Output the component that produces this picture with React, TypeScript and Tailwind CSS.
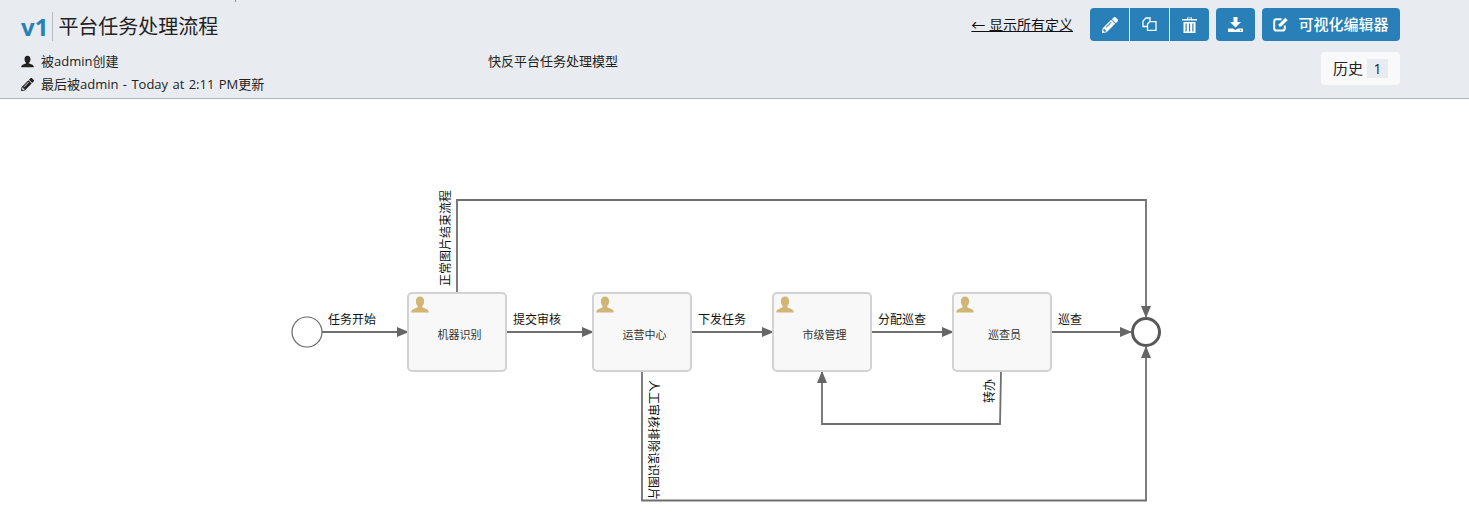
import { FaPencilAlt } from 'react-icons/fa';

const font = '[font-family:"Open_Sans","Noto_Sans_CJK_SC",sans-serif]';

const tasks = [
    { name: '机器识别', left: 'left-[407px]' },
    { name: '运营中心', left: 'left-[592px]' },
    { name: '市级管理', left: 'left-[772px]' },
    { name: '巡查员', left: 'left-[952px]' },
];

const userPath = 'M9 1c2.6 0 3.9 2 3.9 4.4 0 1.8-.7 3.4-1.7 4.3-.3.8 0 1.500.9 1.900 2.200.9 4.700 1.600 5.100 3.400v1H.8v-1c.4-1.800 2.900-2.500 5.100-3.400.9-.4 1.200-1.100.9-1.900-1-.9-1.700-2.500-1.700-4.300C5.100 3 6.400 1 9 1z';

function CopyIcon() {
    return (
        <svg width="15" height="14" viewBox="0 0 15 14" fill="none" stroke="white" strokeWidth="1.300">
            <path d="M5 9.500H1V4L4 1H8V4.500" />
            <path d="M7.500 4.700H14V13.300H5.500V7z" />
        </svg>
    );
}

function TrashIcon() {
    return (
        <svg width="15" height="16" viewBox="0 0 15 16" fill="white">
            <path d="M5 2V.6h5V2h5v1.500H0V2zM6 2h3V1.300H6z" />
            <path d="M1.500 5h12v11h-12zM3.500 6.500v8h1.200v-8zM6.900 6.500v8h1.200v-8zM10.300 6.500v8h1.200v-8z" fillRule="evenodd" />
        </svg>
    );
}

function DownloadIcon() {
    return (
        <svg width="15" height="15" viewBox="0 0 15 15" fill="white">
            <path d="M5.500 0h4v5h3.500l-5.500 5.500L2 5h3.500z" />
            <path d="M0 11.500h5l2.500 1.500 2.500-1.500h5V15H0zM12 12.800v1h1.300v-1z" fillRule="evenodd" />
        </svg>
    );
}

function EditIcon() {
    return (
        <svg width="16" height="15" viewBox="0 0 16 15" fill="none" stroke="white">
            <path d="M8.500 2.200H3.500Q1.200 2.200 1.200 4.500V11.200Q1.200 13.600 3.500 13.600H9.500Q11.800 13.600 11.800 11.200V8.500" strokeWidth="2" />
            <path d="M5.800 9.500V7.300L12.300 .8L14.700 3.200L8.200 9.500z" fill="white" stroke="none" />
        </svg>
    );
}

function Arrow({ d }: { d: string }) {
    return <path d={d} fill="none" stroke="#6f6f6f" strokeWidth="1.800" markerEnd="url(#arrow)" />;
}

function UserGlyph({ className, fill }: { className: string; fill: string }) {
    return (
        <svg className={className} width="18" height="17" viewBox="0.500 0.500 17 16" fill={fill}>
            <path d={userPath} />
        </svg>
    );
}

export default function App() {
    return (
        <div className={`w-[1469px] h-[524px] overflow-hidden bg-white text-[#222] ${font}`}>
            {/* HEADER */}
            <header className="relative h-[99px] bg-[#e8ecf1] border-b border-[#a9b2bf] flex justify-between pl-[21px] pr-[69px]">
                <span className="absolute left-[235px] top-0 w-[1px] h-[2px] bg-[#8a8f96]" />
                <div className="flex flex-col">
                    <div className="flex items-center h-[40px] mt-[6px]">
                        <span className="text-[#2980b9] text-[24px] font-bold pr-[4px] h-[29px] leading-[29px] border-r border-[#b4bcc7]">v1</span>
                        <h1 className="text-[20px] leading-[29px] pl-[5px] text-[#222]">平台任务处理流程</h1>
                    </div>
                    <div className="flex mt-[4px] text-[13px] leading-[23px]">
                        <div className="w-[467px] flex flex-col">
                            <div className="flex items-center gap-[7px]">
                                <UserGlyph className="w-[13px] h-[13px]" fill="#222" />
                                <span>被admin创建</span>
                            </div>
                            <div className="flex items-center gap-[7px]">
                                <FaPencilAlt size={13} className="text-[#222]" />
                                <span className="[word-spacing:1px]">最后被admin - Today at 2:11 PM更新</span>
                            </div>
                        </div>
                        <div>快反平台任务处理模型</div>
                    </div>
                </div>

                <div className="flex flex-col items-end pt-[8px]">
                    <div className="flex items-center h-[33px]">
                        <a className="text-[14px] text-[#111] underline mr-[17px]">← 显示所有定义</a>
                        <div className="flex h-[33px] rounded-[4px] bg-[#2980b9] text-white divide-x divide-[#e8ecf1] mr-[7px]">
                            <button className="w-[40px] flex items-center justify-center"><FaPencilAlt size={16} /></button>
                            <button className="w-[40px] flex items-center justify-center pb-[2px]"><CopyIcon /></button>
                            <button className="w-[39px] flex items-center justify-center"><TrashIcon /></button>
                        </div>
                        <button className="w-[39px] h-[33px] rounded-[4px] bg-[#2980b9] text-white flex items-center justify-center mr-[7px]"><DownloadIcon /></button>
                        <button className="w-[138px] h-[33px] rounded-[4px] bg-[#2980b9] text-white flex items-center justify-center gap-[9px] text-[15px] font-medium">
                            <EditIcon />
                            可视化编辑器
                        </button>
                    </div>
                    <div className="mt-[11px] w-[79px] h-[33px] rounded-[4px] bg-[#f8f9fb] flex items-center pl-[12px] text-[15px]">
                        历史
                        <span className="ml-[4px] w-[21px] h-[19px] bg-[#e8ecf1] flex items-center justify-center text-[14px]">1</span>
                    </div>
                </div>
            </header>

            {/* DIAGRAM */}
            <main className="relative h-[425px]">
                <svg className="absolute left-0 top-0" width="1469" height="425" viewBox="0 99 1469 425">
                    <defs>
                        <marker id="arrow" viewBox="0 0 12 10" refX="12" refY="5" markerWidth="12" markerHeight="10" markerUnits="userSpaceOnUse" orient="auto">
                            <path d="M0 0L12 5L0 10z" fill="#666" />
                        </marker>
                    </defs>
                    <circle cx="307" cy="332" r="15" fill="white" stroke="#666" strokeWidth="1.200" />
                    <circle cx="1146" cy="332" r="13.500" fill="white" stroke="#585858" strokeWidth="3" />
                    <Arrow d="M322 332H409" />
                    <Arrow d="M507 332H594" />
                    <Arrow d="M692 332H774" />
                    <Arrow d="M872 332H954" />
                    <Arrow d="M1052 332H1132" />
                    <Arrow d="M457 292V200H1146V318" />
                    <Arrow d="M642 372V500.500H1146V346" />
                    <Arrow d="M1001 372L1000 424H822V371" />
                    <g fontSize="12" fill="#111">
                        <text x="328" y="324">任务开始</text>
                        <text x="513" y="324">提交审核</text>
                        <text x="698" y="324">下发任务</text>
                        <text x="878" y="324">分配巡查</text>
                        <text x="1058" y="324">巡查</text>
                        <text transform="translate(450 286) rotate(-90)">正常图片结束流程</text>
                        <text transform="translate(649 380) rotate(90)">人工审核排除误识图片</text>
                        <text transform="translate(994 403) rotate(-90)">转办</text>
                    </g>
                </svg>
                {tasks.map((task) => (
                    <div
                        key={task.name}
                        className={`absolute top-[193px] ${task.left} w-[100px] h-[80px] rounded-[5px] border-2 border-[#d2d2d2] bg-[#f8f8f8] flex items-center justify-center pt-[6px] pl-[5px] text-[11px] text-[#333]`}
                    >
                        <UserGlyph className="absolute left-[2px] top-[2px]" fill="#d1b574" />
                        {task.name}
                    </div>
                ))}
            </main>
        </div>
    );
}
